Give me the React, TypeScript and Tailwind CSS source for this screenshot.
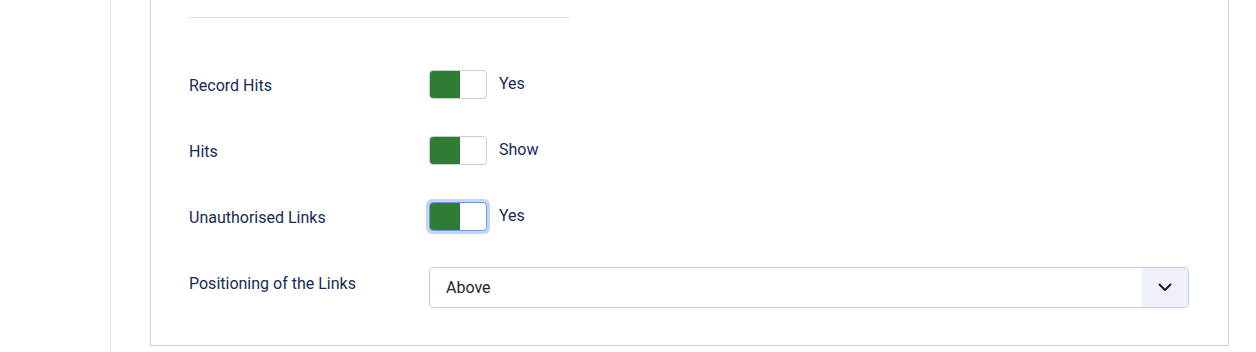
import React from "react";

function Toggle({ focused, label }: { focused?: boolean; label: string }) {
  return (
    <div className="flex items-center">
      <div
        className={
          focused
            ? "rounded-[6px] p-[3px] bg-[#c3d7f2] -m-[3px]"
            : ""
        }
      >
        <div
          className={
            "flex h-[29px] w-[58px] overflow-hidden rounded-[4px] border bg-white " +
            (focused ? "border-[#6f9bd8]" : "border-[#c9ced6]")
          }
        >
          <div className="h-full w-[30px] bg-[#2e7d32]" />
        </div>
      </div>
      <span className="ml-[12px] -mt-[2px] text-[16px] text-[#172b54]">{label}</span>
    </div>
  );
}

function Row({ label, children, className }: { label: string; children: React.ReactNode; className?: string }) {
  return (
    <div className={"flex items-center " + (className ?? "")}>
      <div className="w-[240px] pt-[3px] text-[16px] text-[#172b54]">{label}</div>
      {children}
    </div>
  );
}

export default function App() {
  return (
    <div
      className="flex h-[352px] w-[1256px] overflow-hidden bg-white"
      style={{ fontFamily: "Roboto, 'Noto Sans', sans-serif" }}
    >
      <div className="w-[111px] shrink-0 border-r border-[#e4e6ea]" />
      <div className="ml-[39px] flex h-[346px] w-[1079px] flex-col border-x border-b border-[#c6cfdb] pl-[38px] pr-[38px]">
        <div className="mt-[17px] h-px w-[380px] bg-[#d9dde3]" />
        <Row label="Record Hits" className="mt-[52px] h-[29px]">
          <Toggle label="Yes" />
        </Row>
        <Row label="Hits" className="mt-[37px] h-[29px]">
          <Toggle label="Show" />
        </Row>
        <Row label="Unauthorised Links" className="mt-[37px] h-[29px]">
          <Toggle label="Yes" focused />
        </Row>
        <div className="mt-[36px] flex items-start">
          <div className="w-[240px] pt-[5px] text-[16px] text-[#172b54]">Positioning of the Links</div>
          <div className="flex h-[41px] w-[760px] items-center overflow-hidden rounded-[4px] border border-[#c9ced6] bg-white">
            <span className="flex-1 pl-[16px] text-[16px] text-[#22262a]">Above</span>
            <div className="flex h-full w-[46px] items-center justify-center bg-[#eef1f9]">
              <svg width="14" height="9" viewBox="0 0 14 9" fill="none">
                <path d="M1.5 1.5 L7 7 L12.5 1.5" stroke="#1a1d21" strokeWidth="2" strokeLinecap="round" strokeLinejoin="round" />
              </svg>
            </div>
          </div>
        </div>
      </div>
    </div>
  );
}
